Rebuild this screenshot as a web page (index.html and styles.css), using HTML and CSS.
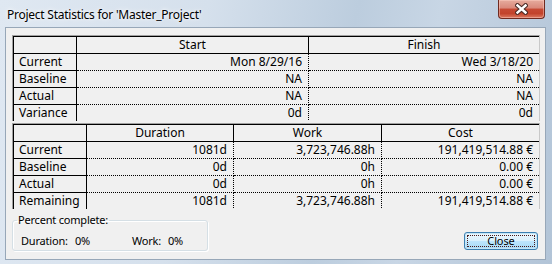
FILE: index.html
```html
<!DOCTYPE html>
<html lang="en">
<head>
    <meta charset="UTF-8">
    <title>Project Statistics</title>
    <link rel="stylesheet" href="styles.css">
</head>
<body>

<div class="window">
    <!-- Title bar -->
    <div class="titlebar">
        <span class="title">Project Statistics for 'Master_Project'</span>
        <div class="close-x">
            <svg width="13" height="12" viewBox="0 0 13 12">
                <path d="M2.5 2.5 L10.5 9.5 M10.5 2.5 L2.5 9.5" stroke="#4b2b27" stroke-width="4.6" stroke-linecap="square"/>
                <path d="M2.5 2.5 L10.5 9.5 M10.5 2.5 L2.5 9.5" stroke="#fff" stroke-width="2.4" stroke-linecap="square"/>
            </svg>
        </div>
    </div>

    <!-- Dialog body -->
    <div class="client">
        <div class="stats">
            <div class="grid dates">
                <div class="cell head"></div>
                <div class="cell head">Start</div>
                <div class="cell head last">Finish</div>

                <div class="cell label">Current</div>
                <div class="cell val">Mon 8/29/16</div>
                <div class="cell val last">Wed 3/18/20</div>

                <div class="cell label">Baseline</div>
                <div class="cell val">NA</div>
                <div class="cell val last">NA</div>

                <div class="cell label">Actual</div>
                <div class="cell val">NA</div>
                <div class="cell val last">NA</div>

                <div class="cell label">Variance</div>
                <div class="cell val">0d</div>
                <div class="cell val last">0d</div>
            </div>
        </div>

        <div class="stats second">
            <div class="grid totals">
                <div class="cell head"></div>
                <div class="cell head">Duration</div>
                <div class="cell head">Work</div>
                <div class="cell head last">Cost</div>

                <div class="cell label">Current</div>
                <div class="cell val">1081d</div>
                <div class="cell val">3,723,746.88h</div>
                <div class="cell val last">191,419,514.88 &euro;</div>

                <div class="cell label">Baseline</div>
                <div class="cell val">0d</div>
                <div class="cell val">0h</div>
                <div class="cell val last">0.00 &euro;</div>

                <div class="cell label">Actual</div>
                <div class="cell val">0d</div>
                <div class="cell val">0h</div>
                <div class="cell val last">0.00 &euro;</div>

                <div class="cell label">Remaining</div>
                <div class="cell val">1081d</div>
                <div class="cell val">3,723,746.88h</div>
                <div class="cell val last">191,419,514.88 &euro;</div>
            </div>
        </div>

        <div class="footer">
            <fieldset class="percent">
                <legend>Percent complete:</legend>
                <div class="pct-row">
                    <span class="pct-dur">Duration:</span>
                    <span class="pct-dur-val">0%</span>
                    <span class="pct-work">Work:</span>
                    <span>0%</span>
                </div>
            </fieldset>
            <button class="btn">Close</button>
        </div>
    </div>
</div>

</body>
</html>
```

FILE: styles.css
```css
body {
    margin: 0;
    padding: 0;
    overflow: hidden;
    font-family: "Noto Sans", "Open Sans", sans-serif;
    font-size: 12px;
    color: #000;
}

/* Window frame (glass) */
.window {
    width: 552px;
    height: 264px;
    display: flex;
    flex-direction: column;
    background: linear-gradient(100deg, #dfe8f2 0%, #d5e0ec 35%, #bccdde 60%, #c8d6e5 74%, #b2c4d7 100%);
}

.titlebar {
    height: 27px;
    display: flex;
    align-items: flex-start;
    flex-shrink: 0;
}

.title {
    margin: 7px 0 0 7px;
    line-height: 16px;
    letter-spacing: -0.25px;
    text-shadow: 0 0 6px rgba(255, 255, 255, 0.95), 0 0 3px rgba(255, 255, 255, 0.9);
}

.close-x {
    margin-left: auto;
    margin-right: 7px;
    width: 47px;
    height: 19px;
    box-sizing: border-box;
    border: 1px solid #6f2a20;
    border-top: none;
    border-radius: 0 0 4px 4px;
    background: linear-gradient(#e6ab9d 0%, #d9887a 45%, #c64a34 50%, #c2432c 75%, #dc7a61 100%);
    box-shadow: inset 0 0 0 1px rgba(255, 210, 200, 0.45);
    display: flex;
    align-items: center;
    justify-content: center;
}

/* Client area */
.client {
    margin: 0 6px 0 5px;
    height: 233px;
    box-sizing: border-box;
    border: 1px solid #97a7b8;
    background-color: #f0f0f0;
    padding: 7px 0 0 6px;
}

/* Statistic grids */
.stats {
    width: 528px;
    height: 86px;
    box-sizing: border-box;
    overflow: hidden;
    border-top: 1px solid #a0a0a0;
    border-left: 1px solid #a0a0a0;
    border-right: 1px solid #c9c9c9;
}

.stats.second {
    margin-top: 2px;
}

.grid {
    display: grid;
    grid-auto-rows: 17px;
    border-top: 1px solid #000;
    border-left: 1px solid #000;
}

.dates {
    grid-template-columns: 63px 232px 230px;
}

.totals {
    grid-template-columns: 73px 147px 148px 157px;
}

.cell {
    box-sizing: border-box;
    height: 17px;
    line-height: 16px;
    white-space: nowrap;
    border-bottom: 1px dotted #000;
    border-right: 1px dotted #000;
    padding: 0 6px;
}

.cell.head {
    text-align: center;
    border-bottom: 1px solid #000;
    border-right: 1px solid #000;
}

.cell.label {
    padding-left: 5px;
    border-bottom: 1px solid #000;
    border-right: 1px solid #000;
}

.cell.val {
    text-align: right;
}

.cell.last {
    border-right: none;
}

/* Bottom area */
.footer {
    width: 528px;
    display: flex;
    justify-content: space-between;
    align-items: flex-end;
    margin-top: 3px;
    font-size: 11px;
    letter-spacing: -0.2px;
}

.percent {
    width: 196px;
    box-sizing: border-box;
    margin: 0;
    padding: 5px 0 1px 8px;
    border: 1px solid #d5dfe5;
    border-radius: 3px;
    box-shadow: inset 1px 1px 0 #fff, 1px 1px 0 #fff;
}

.percent legend {
    padding: 0 1px;
    margin-left: -4px;
    line-height: 16px;
}

.pct-row {
    display: flex;
    line-height: 16px;
}

.pct-dur {
    width: 54px;
}

.pct-dur-val {
    width: 57px;
}

.pct-work {
    width: 36px;
}

.btn {
    width: 74px;
    height: 18px;
    margin: 0 2px 1px 0;
    padding: 0;
    font-family: inherit;
    font-size: 11px;
    letter-spacing: -0.1px;
    color: #000;
    line-height: 14px;
    border: 1px solid #3c7fb1;
    border-radius: 3px;
    background: linear-gradient(#eaf6fd 0%, #d9f0fc 50%, #bee6fd 51%, #a7d9f5 100%);
    box-shadow: inset 0 0 0 1px #c4e5f6;
    outline: 1px dotted #4a1a1a;
    outline-offset: -4px;
}
```
